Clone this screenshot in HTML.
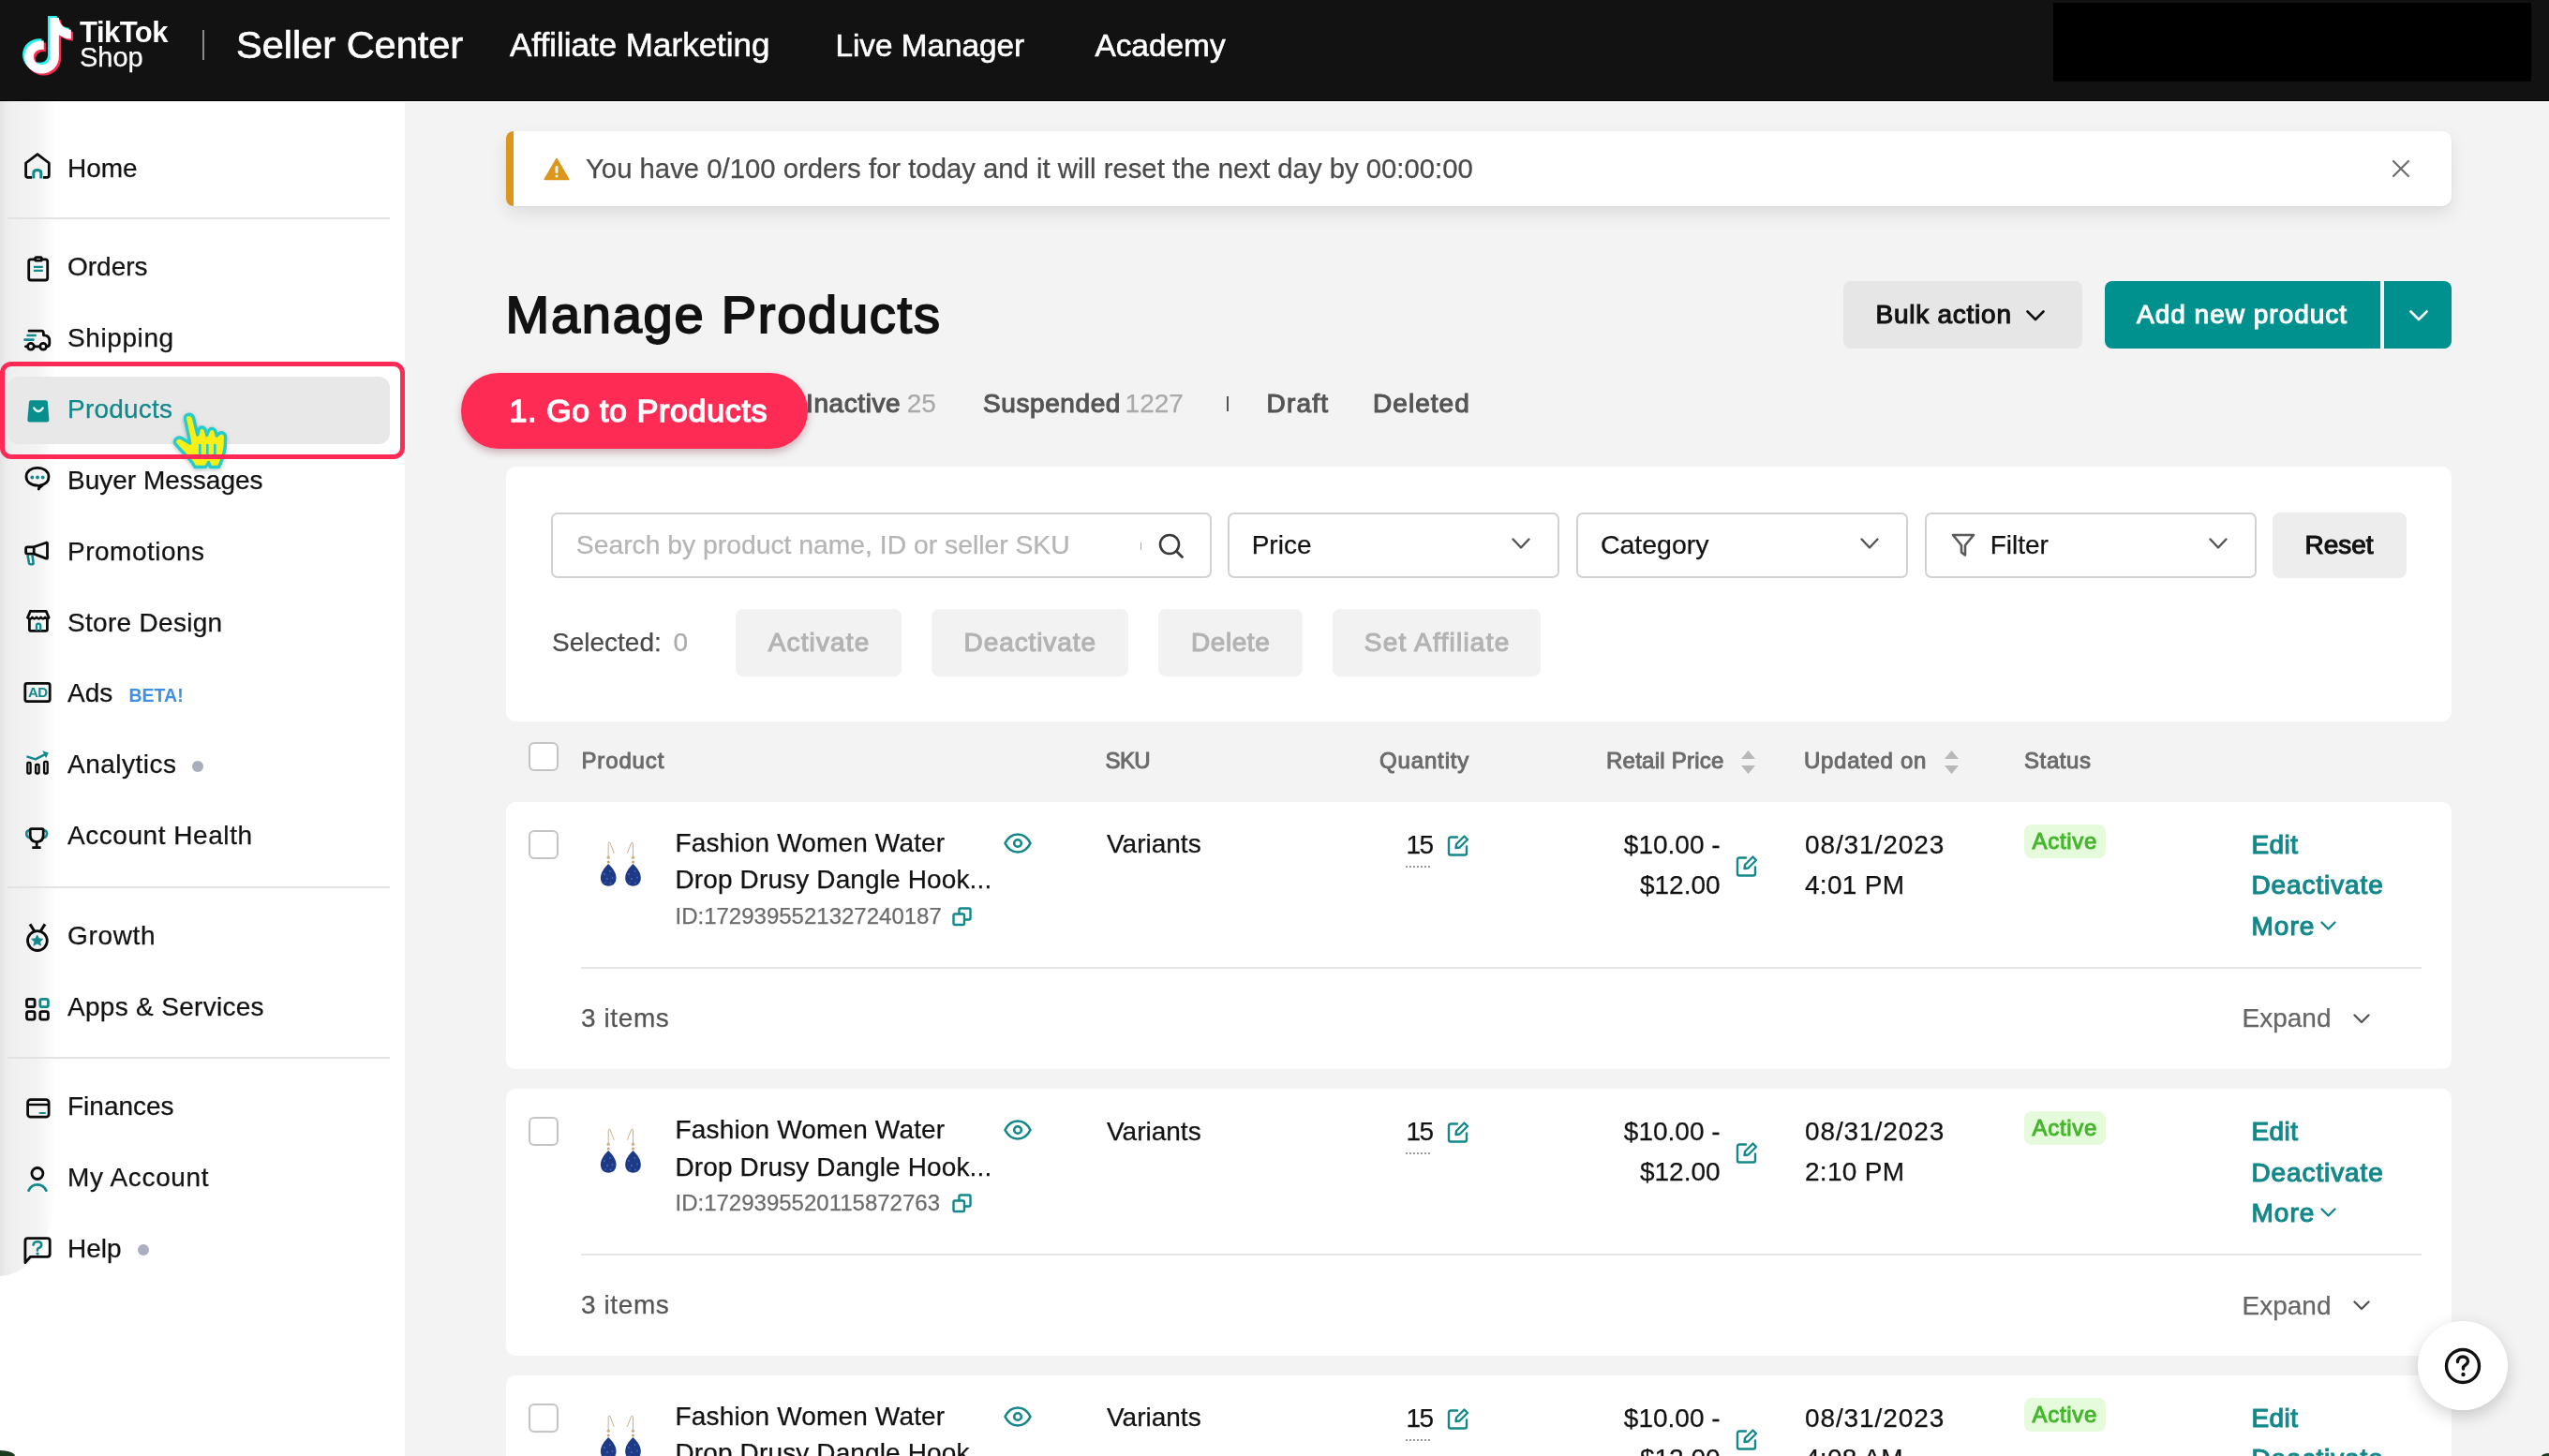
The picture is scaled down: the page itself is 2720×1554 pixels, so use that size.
<!DOCTYPE html>
<html><head><meta charset="utf-8"><style>
html,body{margin:0;padding:0;width:2720px;height:1554px;overflow:hidden;background:#f3f3f3;}
body{position:relative;font-family:"Liberation Sans",sans-serif;}
.t{position:absolute;white-space:pre;}
.t.n{-webkit-text-stroke:0.25px currentColor;}
.r{position:absolute;}
svg.r{overflow:visible}
</style></head><body>
<div style="position:absolute;left:0;top:0;width:2720px;height:1554px;overflow:hidden;will-change:transform">
<div class="r" style="left:0.0px;top:0.0px;width:2720.0px;height:108.0px;background:#121212"></div>
<div class="r" style="left:0.0px;top:106.5px;width:2720.0px;height:1.5px;background:#000"></div>
<div class="r" style="left:0.0px;top:108.0px;width:2720.0px;height:1.0px;background:#fff"></div>
<div class="r" style="left:2191.0px;top:3.0px;width:510.0px;height:84.0px;background:#000"></div>
<svg class="r" style="left:24.0px;top:16.0px" width="58" height="66" viewBox="0 0 58 66"><g transform="translate(0,1) scale(1.08,1.06)">
<path d="M27 2 h9 c0.5 6 4 11 12 12 v9 c-5 0 -9 -2 -12 -4 v22 c0 10 -8 17 -17 17 c-9 0 -17 -7 -17 -17 c0 -10 9 -17 19 -16 v9 c-5 -1 -10 2 -10 7 c0 5 4 8 8 8 c5 0 8 -3 8 -8 z" fill="#25f4ee" transform="translate(-2,-2)"/>
<path d="M27 2 h9 c0.5 6 4 11 12 12 v9 c-5 0 -9 -2 -12 -4 v22 c0 10 -8 17 -17 17 c-9 0 -17 -7 -17 -17 c0 -10 9 -17 19 -16 v9 c-5 -1 -10 2 -10 7 c0 5 4 8 8 8 c5 0 8 -3 8 -8 z" fill="#fe2c55" transform="translate(2,2)"/>
<path d="M27 2 h9 c0.5 6 4 11 12 12 v9 c-5 0 -9 -2 -12 -4 v22 c0 10 -8 17 -17 17 c-9 0 -17 -7 -17 -17 c0 -10 9 -17 19 -16 v9 c-5 -1 -10 2 -10 7 c0 5 4 8 8 8 c5 0 8 -3 8 -8 z" fill="#fff"/>
</g></svg>
<div class="t " style="left:85.0px;top:18.5px;font-size:31px;line-height:31px;color:#fff;font-weight:700;letter-spacing:-0.5px">TikTok</div>
<div class="t n" style="left:85.0px;top:47.3px;font-size:29px;line-height:29px;color:#fff;font-weight:400;">Shop</div>
<div class="r" style="left:216.0px;top:32.0px;width:2.0px;height:32.0px;background:#8a8a8a"></div>
<div class="t " style="left:252.0px;top:26.7px;font-size:41.5px;line-height:41.5px;color:#fff;font-weight:400;-webkit-text-stroke:0.7px #fff">Seller Center</div>
<div class="t " style="left:544.0px;top:30.4px;font-size:35px;line-height:35px;color:#fff;font-weight:400;-webkit-text-stroke:0.6px #fff">Affiliate Marketing</div>
<div class="t " style="left:891.4px;top:31.8px;font-size:33.3px;line-height:33.3px;color:#fff;font-weight:400;-webkit-text-stroke:0.6px #fff">Live Manager</div>
<div class="t " style="left:1168.4px;top:31.7px;font-size:33.4px;line-height:33.4px;color:#fff;font-weight:400;-webkit-text-stroke:0.6px #fff">Academy</div>
<div class="r" style="left:0.0px;top:108.0px;width:432.0px;height:1446.0px;background:#fff"></div>
<div class="r" style="left:0.0px;top:108.0px;width:60.0px;height:1254.0px;background:linear-gradient(90deg,#e3e3e3 0px,#ebebeb 6px,#f0f0f0 14px,#f3f3f3 40px,rgba(255,255,255,0) 60px);border-bottom-right-radius:60px 100px"></div>
<div class="r" style="left:8.0px;top:231.5px;width:408.0px;height:2.0px;background:#e3e3e3"></div>
<div class="r" style="left:8.0px;top:945.6px;width:408.0px;height:2.0px;background:#e3e3e3"></div>
<div class="r" style="left:8.0px;top:1127.5px;width:408.0px;height:2.0px;background:#e3e3e3"></div>
<div class="r" style="left:8.0px;top:402.0px;width:408.0px;height:72.0px;background:#e8e8e8;border-radius:12px"></div>
<div class="t n" style="left:72.0px;top:165.6px;font-size:28px;line-height:28px;color:#121212;font-weight:400;letter-spacing:0px">Home</div>
<div class="t n" style="left:72.0px;top:271.1px;font-size:28px;line-height:28px;color:#121212;font-weight:400;letter-spacing:0px">Orders</div>
<div class="t n" style="left:72.0px;top:347.1px;font-size:28px;line-height:28px;color:#121212;font-weight:400;letter-spacing:0.6px">Shipping</div>
<div class="t n" style="left:72.0px;top:423.0px;font-size:28px;line-height:28px;color:#13888a;font-weight:400;letter-spacing:0.2px">Products</div>
<div class="t n" style="left:72.0px;top:499.3px;font-size:28px;line-height:28px;color:#121212;font-weight:400;letter-spacing:0px">Buyer Messages</div>
<div class="t n" style="left:72.0px;top:574.8px;font-size:28px;line-height:28px;color:#121212;font-weight:400;letter-spacing:0.5px">Promotions</div>
<div class="t n" style="left:72.0px;top:650.6px;font-size:28px;line-height:28px;color:#121212;font-weight:400;letter-spacing:0.3px">Store Design</div>
<div class="t n" style="left:72.0px;top:726.3px;font-size:28px;line-height:28px;color:#121212;font-weight:400;letter-spacing:0px">Ads</div>
<div class="t n" style="left:72.0px;top:801.7px;font-size:28px;line-height:28px;color:#121212;font-weight:400;letter-spacing:0.5px">Analytics</div>
<div class="t n" style="left:72.0px;top:877.9px;font-size:28px;line-height:28px;color:#121212;font-weight:400;letter-spacing:0.55px">Account Health</div>
<div class="t n" style="left:72.0px;top:985.3px;font-size:28px;line-height:28px;color:#121212;font-weight:400;letter-spacing:0.65px">Growth</div>
<div class="t n" style="left:72.0px;top:1061.0px;font-size:28px;line-height:28px;color:#121212;font-weight:400;letter-spacing:0.3px">Apps &amp; Services</div>
<div class="t n" style="left:72.0px;top:1167.3px;font-size:28px;line-height:28px;color:#121212;font-weight:400;letter-spacing:0px">Finances</div>
<div class="t n" style="left:72.0px;top:1243.3px;font-size:28px;line-height:28px;color:#121212;font-weight:400;letter-spacing:0.65px">My Account</div>
<div class="t n" style="left:72.0px;top:1318.8px;font-size:28px;line-height:28px;color:#121212;font-weight:400;letter-spacing:0px">Help</div>
<svg class="r" style="left:0;top:0" width="432" height="1554" viewBox="0 0 432 1554"><path d="M27.6 174 L40 164.6 L52.3 174 V187.3 Q52.3 189.3 50.3 189.3 H29.6 Q27.6 189.3 27.6 187.3 Z" fill="none" stroke="#0a0a0a" stroke-width="2.8" stroke-linejoin="round"/><rect x="34" y="186" width="12" height="6" fill="#f4f4f4"/><path d="M35.8 190.5 V184.5 Q35.8 181.5 39.8 181.5 Q43.8 181.5 43.8 184.5 V190.5" fill="none" stroke="#13898b" stroke-width="3"/><rect x="30.7" y="276.8" width="20" height="22.2" rx="2.2" fill="none" stroke="#0a0a0a" stroke-width="2.8"/><rect x="37.6" y="274.6" width="6.8" height="3.6" rx="1.2" fill="#f6f6f6" stroke="#0a0a0a" stroke-width="2.8"/><path d="M35.9 284.9 H45.8 M35.9 288.9 H45.8" stroke="#13898b" stroke-width="2.4"/><path d="M31 353.2 H44.5 Q46.4 353.2 46.4 355.5 V357.8 H47 Q52.8 358 52.8 363.5 V366.5 Q52.8 369.8 50 369.8 H49.5" fill="none" stroke="#0a0a0a" stroke-width="2.8" stroke-linecap="round" stroke-linejoin="round"/><path d="M27.4 369.8 H29.5 M36.3 369.8 H42.7" stroke="#0a0a0a" stroke-width="2.8" stroke-linecap="round"/><circle cx="32.9" cy="369.8" r="3.4" fill="none" stroke="#0a0a0a" stroke-width="2.8"/><circle cx="46.1" cy="369.8" r="3.4" fill="none" stroke="#0a0a0a" stroke-width="2.8"/><path d="M29.5 358 H37.7 M26.5 362.6 H35.5" stroke="#13898b" stroke-width="2.6" stroke-linecap="round"/><path d="M33 427.3 H48.8 Q50.8 427.3 50.9 429.3 L52.4 448.3 Q52.5 450.4 50.4 450.4 H31.3 Q29.2 450.4 29.3 448.3 L31 429.3 Q31.1 427.3 33 427.3 Z" fill="#078f8d"/><path d="M36.3 435.6 Q40.9 442.5 45.6 435.6" fill="none" stroke="#e9f7f7" stroke-width="2.4" stroke-linecap="round"/><path d="M41.3 522 L42.5 518.2 C49 517 52 513.2 52 508.8 C52 503.2 46.6 499.3 39.9 499.3 C33.2 499.3 28 503.2 28 508.8 C28 514 32.5 517.8 40 518.2" fill="none" stroke="#0a0a0a" stroke-width="2.8" stroke-linejoin="round" stroke-linecap="round"/><path d="M40 517.6 L41.5 522.8 L47 518.5 Z" fill="#0a0a0a"/><circle cx="34.3" cy="509.5" r="1.9" fill="#13898b"/><circle cx="40" cy="509.5" r="1.9" fill="#13898b"/><circle cx="45.7" cy="509.5" r="1.9" fill="#13898b"/><path d="M29.5 592.5 L31 601 Q31.3 602.3 32.5 602.3 H34.5 Q35.8 602.3 35.6 601 L34.5 592.5" fill="none" stroke="#13898b" stroke-width="2.6" stroke-linejoin="round"/><path d="M29.4 583.8 H36.2 V591.1 H29.4 Q27.6 591.1 27.6 589.3 V585.6 Q27.6 583.8 29.4 583.8 Z" fill="#f5f5f5" stroke="#0a0a0a" stroke-width="2.8" stroke-linejoin="round"/><path d="M36.2 583.8 L49.3 579.2 Q50.5 578.9 50.5 580.2 V595.2 Q50.5 596.5 49.3 596.1 L36.2 591.1" fill="none" stroke="#0a0a0a" stroke-width="2.8" stroke-linejoin="round"/><path d="M32.4 652.3 H49.2 L52 659 M32.4 652.3 L29.6 659" fill="none" stroke="#0a0a0a" stroke-width="2.8" stroke-linejoin="round" stroke-linecap="round"/><path d="M29.6 659.3 Q32.5 662 34.4 658.8 Q36.6 662 39 658.8 Q41.4 662 43.6 658.8 Q45.9 662 48.2 658.8 Q50 661.5 52.1 659.3" fill="none" stroke="#0a0a0a" stroke-width="2.5" stroke-linejoin="round" stroke-linecap="round"/><path d="M31.4 660.5 V671.8 Q31.4 673.4 33 673.4 H48.8 Q50.4 673.4 50.4 671.8 V660.5" fill="none" stroke="#0a0a0a" stroke-width="2.8"/><path d="M39 673 V667.5 Q39 665.6 41.1 665.6 Q43.2 665.6 43.2 667.5 V673" fill="none" stroke="#13898b" stroke-width="2.3"/><rect x="26.8" y="729.4" width="26.4" height="19.2" rx="2" fill="none" stroke="#0a0a0a" stroke-width="2.8"/><text x="40.2" y="744.2" text-anchor="middle" font-family="Liberation Sans" font-weight="700" font-size="15" fill="#13898b" letter-spacing="-0.6">AD</text><rect x="29.3" y="813.9" width="3.3" height="11.6" rx="1" fill="none" stroke="#0a0a0a" stroke-width="2.3"/><rect x="38.1" y="816" width="3.5" height="9.5" rx="1" fill="none" stroke="#0a0a0a" stroke-width="2.3"/><rect x="47.1" y="812.9" width="3.6" height="12.6" rx="1" fill="none" stroke="#0a0a0a" stroke-width="2.3"/><path d="M28.4 807.4 L37.9 810.4 L48.5 804.8" fill="none" stroke="#13898b" stroke-width="2.5" stroke-linejoin="round"/><path d="M45.3 801.3 L51.8 803.4 L49 809.3 Z" fill="#13898b"/><path d="M31.6 886.2 Q28.2 886.2 28.2 889.5 Q28.2 893.6 32.6 894.6 M46.6 886.2 Q50 886.2 50 889.5 Q50 893.6 45.6 894.6" fill="none" stroke="#13898b" stroke-width="2.6" stroke-linecap="round"/><path d="M33.4 884.6 H45 Q46.2 884.6 46.2 885.8 V891.5 Q46.2 898.2 39.2 898.6 Q32.2 898.2 32.2 891.5 V885.8 Q32.2 884.6 33.4 884.6 Z" fill="none" stroke="#0a0a0a" stroke-width="2.8" stroke-linejoin="round"/><path d="M39.2 898.6 V904.3 M34.3 904.6 H43.6" stroke="#0a0a0a" stroke-width="2.8"/><path d="M32 986.4 L36.5 993.5 M48 986.4 L43.5 993.5" stroke="#0a0a0a" stroke-width="3"/><circle cx="39.9" cy="1004.1" r="10.4" fill="none" stroke="#0a0a0a" stroke-width="2.8"/><path d="M39.7 997.9 L41.6 1001.8 L45.8 1002.2 L42.7 1005 L43.6 1009.2 L39.7 1007 L35.8 1009.2 L36.8 1005 L33.6 1002.2 L37.9 1001.8 Z" fill="#13898b" stroke="#13898b" stroke-width="0.8" stroke-linejoin="round"/><rect x="28.5" y="1066.3" width="8.6" height="8.4" rx="2" fill="none" stroke="#0a0a0a" stroke-width="2.8"/><rect x="42.8" y="1066.3" width="8.6" height="8.4" rx="2" fill="none" stroke="#13898b" stroke-width="2.8"/><rect x="28.5" y="1079.7" width="8.6" height="8.4" rx="2" fill="none" stroke="#0a0a0a" stroke-width="2.8"/><rect x="42.8" y="1079.7" width="8.6" height="8.4" rx="2" fill="none" stroke="#0a0a0a" stroke-width="2.8"/><rect x="29.6" y="1173.6" width="22.5" height="18.6" rx="3" fill="none" stroke="#0a0a0a" stroke-width="2.8"/><path d="M30 1179 H51.8" stroke="#0a0a0a" stroke-width="2.4"/><path d="M42.6 1188 H48" stroke="#13898b" stroke-width="2.2" stroke-linecap="round"/><circle cx="39.9" cy="1252.5" r="6" fill="none" stroke="#0a0a0a" stroke-width="2.8"/><path d="M30.6 1270.6 Q33.5 1264.3 39.9 1264.3 Q46.3 1264.3 49.3 1270.6" fill="none" stroke="#13898b" stroke-width="2.8" stroke-linecap="round"/><path d="M26.9 1347.6 V1324.4 Q26.9 1321.6 29.7 1321.6 H50.4 Q53.2 1321.6 53.2 1324.4 V1338.5 Q53.2 1341.3 50.4 1341.3 H32.6 Z" fill="none" stroke="#0a0a0a" stroke-width="2.8" stroke-linejoin="round"/><path d="M35.6 1328.6 Q36 1325.2 40.1 1325.2 Q44.3 1325.2 44.3 1328.6 Q44.3 1330.8 41.8 1331.8 Q39.9 1332.5 39.9 1334.6" fill="none" stroke="#13898b" stroke-width="2.6" stroke-linecap="round"/><circle cx="40.1" cy="1338.1" r="1.7" fill="#13898b"/></svg>
<div class="t " style="left:137.5px;top:732.5px;font-size:19.5px;line-height:19.5px;color:#3f8fe6;font-weight:700;letter-spacing:0px">BETA!</div>
<div class="r" style="left:205.0px;top:812.0px;width:12.0px;height:12.0px;background:#a9aec0;border-radius:50%"></div>
<div class="r" style="left:147.0px;top:1328.0px;width:12.0px;height:12.0px;background:#a9aec0;border-radius:50%"></div>
<div class="r" style="left:432.0px;top:109.0px;width:2288.0px;height:1445.0px;background:#f3f3f3"></div>
<div class="r" style="left:540.0px;top:140.0px;width:2076.0px;height:80.0px;background:#fff;border-radius:10px;box-shadow:0 8px 18px rgba(0,0,0,0.09),0 1px 3px rgba(0,0,0,0.04);overflow:hidden"></div>
<div class="r" style="left:540.0px;top:140.0px;width:8.0px;height:80.0px;background:#dc961c;border-radius:10px 0 0 10px"></div>
<svg class="r" style="left:580.0px;top:168.0px" width="28" height="25" viewBox="0 0 28 25"><path d="M14 1.5 L26.8 23.5 H1.2 Z" fill="#dc961c" stroke="#dc961c" stroke-width="1.5" stroke-linejoin="round"/><rect x="12.6" y="9" width="2.8" height="8" rx="1" fill="#fff"/><circle cx="14" cy="20" r="1.5" fill="#fff"/></svg>
<div class="t n" style="left:625.0px;top:164.6px;font-size:29.3px;line-height:29.3px;color:#4a4a4a;font-weight:400;">You have 0/100 orders for today and it will reset the next day by 00:00:00</div>
<svg class="r" style="left:2553.0px;top:171.0px" width="18" height="18" viewBox="0 0 18 18"><path d="M1 1 L17 17 M17 1 L1 17" stroke="#6e6e6e" stroke-width="2.2" stroke-linecap="round"/></svg>
<div class="t " style="left:539.5px;top:308.2px;font-size:56px;line-height:56px;color:#121212;font-weight:401;-webkit-text-stroke:1.9px #121212;letter-spacing:1.75px;">Manage Products</div>
<div class="r" style="left:1967.0px;top:300.0px;width:255.0px;height:71.5px;background:#e6e6e6;border-radius:8px"></div>
<div class="t " style="left:2001.5px;top:321.7px;font-size:28px;line-height:28px;color:#121212;font-weight:401;-webkit-text-stroke:1.12px #121212;letter-spacing:0.75px;">Bulk action</div>
<svg class="r" style="left:2162.0px;top:331.0px" width="20" height="12" viewBox="0 0 20 12"><path d="M1.5 1.5 L10 10 L18.5 1.5" fill="none" stroke="#121212" stroke-width="2.6" stroke-linecap="round" stroke-linejoin="round"/></svg>
<div class="r" style="left:2246.0px;top:300.0px;width:294.0px;height:71.5px;background:#00918f;border-radius:8px 0 0 8px"></div>
<div class="r" style="left:2544.0px;top:300.0px;width:72.0px;height:71.5px;background:#00918f;border-radius:0 8px 8px 0"></div>
<div class="t " style="left:2280.0px;top:321.7px;font-size:28px;line-height:28px;color:#fff;font-weight:401;-webkit-text-stroke:1.12px #fff;letter-spacing:1.0px;">Add new product</div>
<svg class="r" style="left:2571.0px;top:331.0px" width="20" height="12" viewBox="0 0 20 12"><path d="M1.5 1.5 L10 10 L18.5 1.5" fill="none" stroke="#fff" stroke-width="2.6" stroke-linecap="round" stroke-linejoin="round"/></svg>
<div class="t " style="left:860.0px;top:417.1px;font-size:28px;line-height:28px;color:#555555;font-weight:401;-webkit-text-stroke:1.12px #555555;letter-spacing:0.6px;">Inactive</div>
<div class="t n" style="left:967.7px;top:417.1px;font-size:28px;line-height:28px;color:#aaaaaa;font-weight:400;">25</div>
<div class="t " style="left:1049.0px;top:417.1px;font-size:28px;line-height:28px;color:#555555;font-weight:401;-webkit-text-stroke:1.12px #555555;letter-spacing:0.59px;">Suspended</div>
<div class="t n" style="left:1200.6px;top:417.1px;font-size:28px;line-height:28px;color:#aaaaaa;font-weight:400;">1227</div>
<div class="r" style="left:1308.5px;top:423.0px;width:2.0px;height:16.0px;background:#555"></div>
<div class="t " style="left:1351.5px;top:417.1px;font-size:28px;line-height:28px;color:#555555;font-weight:401;-webkit-text-stroke:1.12px #555555;letter-spacing:1.2px;">Draft</div>
<div class="t " style="left:1465.0px;top:417.1px;font-size:28px;line-height:28px;color:#555555;font-weight:401;-webkit-text-stroke:1.12px #555555;letter-spacing:1.05px;">Deleted</div>
<div class="r" style="left:540.0px;top:498.0px;width:2076.0px;height:272.0px;background:#fff;border-radius:10px"></div>
<div class="r" style="left:588.4px;top:546.5px;width:704.3px;height:70.5px;background:#fff;border:2px solid #d2d2d2;border-radius:7px;box-sizing:border-box"></div>
<div class="t n" style="left:614.8px;top:567.4px;font-size:28.3px;line-height:28.3px;color:#b5b5b5;font-weight:400;">Search by product name, ID or seller SKU</div>
<div class="r" style="left:1216.5px;top:579.0px;width:1.5px;height:8.0px;background:#aaa"></div>
<svg class="r" style="left:1236.0px;top:569.0px" width="28" height="28" viewBox="0 0 28 28"><circle cx="12" cy="12" r="10" fill="none" stroke="#3a3a3a" stroke-width="2.6"/><path d="M19.5 19.5 L25.5 25.5" stroke="#3a3a3a" stroke-width="2.8" stroke-linecap="round"/></svg>
<div class="r" style="left:1309.6px;top:546.5px;width:354.9px;height:70.5px;background:#fff;border:2px solid #d2d2d2;border-radius:7px;box-sizing:border-box"></div>
<div class="t n" style="left:1335.7px;top:567.7px;font-size:28px;line-height:28px;color:#121212;font-weight:400;">Price</div>
<svg class="r" style="left:1613.0px;top:573.5px" width="20" height="12" viewBox="0 0 20 12"><path d="M1.5 1.5 L10 10.5 L18.5 1.5" fill="none" stroke="#555" stroke-width="2.4" stroke-linecap="round" stroke-linejoin="round"/></svg>
<div class="r" style="left:1681.8px;top:546.5px;width:354.6px;height:70.5px;background:#fff;border:2px solid #d2d2d2;border-radius:7px;box-sizing:border-box"></div>
<div class="t n" style="left:1707.9px;top:567.3px;font-size:28.5px;line-height:28.5px;color:#121212;font-weight:400;">Category</div>
<svg class="r" style="left:1985.0px;top:573.5px" width="20" height="12" viewBox="0 0 20 12"><path d="M1.5 1.5 L10 10.5 L18.5 1.5" fill="none" stroke="#555" stroke-width="2.4" stroke-linecap="round" stroke-linejoin="round"/></svg>
<div class="r" style="left:2053.8px;top:546.5px;width:354.7px;height:70.5px;background:#fff;border:2px solid #d2d2d2;border-radius:7px;box-sizing:border-box"></div>
<svg class="r" style="left:2082.0px;top:569.0px" width="26" height="26" viewBox="0 0 26 26"><path d="M2 2 H24 L15 13 V23.5 L11 20.5 V13 Z" fill="none" stroke="#5a5a5a" stroke-width="2.6" stroke-linejoin="round"/></svg>
<div class="t n" style="left:2123.7px;top:567.7px;font-size:28px;line-height:28px;color:#121212;font-weight:400;">Filter</div>
<svg class="r" style="left:2357.0px;top:573.5px" width="20" height="12" viewBox="0 0 20 12"><path d="M1.5 1.5 L10 10.5 L18.5 1.5" fill="none" stroke="#555" stroke-width="2.4" stroke-linecap="round" stroke-linejoin="round"/></svg>
<div class="r" style="left:2425.4px;top:546.5px;width:142.4px;height:70.5px;background:#ededed;border-radius:8px"></div>
<div class="t " style="left:2459.5px;top:567.7px;font-size:28px;line-height:28px;color:#121212;font-weight:401;-webkit-text-stroke:1.12px #121212;letter-spacing:0.0px;">Reset</div>
<div class="t n" style="left:589.0px;top:671.9px;font-size:28px;line-height:28px;color:#4a4a4a;font-weight:400;">Selected: </div>
<div class="t n" style="left:718.5px;top:671.9px;font-size:28px;line-height:28px;color:#aaaaaa;font-weight:400;">0</div>
<div class="r" style="left:785.0px;top:650.0px;width:177.0px;height:71.7px;background:#f2f2f2;border-radius:8px"></div>
<div class="t" style="left:785px;width:177.0px;top:671.9px;font-size:28px;line-height:28px;color:#b3b3b3;font-weight:400;text-align:center;-webkit-text-stroke:1.12px #b3b3b3;letter-spacing:1.14px;text-indent:1.14px">Activate</div>
<div class="r" style="left:994.0px;top:650.0px;width:209.6px;height:71.7px;background:#f2f2f2;border-radius:8px"></div>
<div class="t" style="left:994px;width:209.6px;top:671.9px;font-size:28px;line-height:28px;color:#b3b3b3;font-weight:400;text-align:center;-webkit-text-stroke:1.12px #b3b3b3;letter-spacing:0.91px;text-indent:0.91px">Deactivate</div>
<div class="r" style="left:1236.0px;top:650.0px;width:153.8px;height:71.7px;background:#f2f2f2;border-radius:8px"></div>
<div class="t" style="left:1236px;width:153.8px;top:671.9px;font-size:28px;line-height:28px;color:#b3b3b3;font-weight:400;text-align:center;-webkit-text-stroke:1.12px #b3b3b3;letter-spacing:0.54px;text-indent:0.54px">Delete</div>
<div class="r" style="left:1422.0px;top:650.0px;width:222.0px;height:71.7px;background:#f2f2f2;border-radius:8px"></div>
<div class="t" style="left:1422px;width:222.0px;top:671.9px;font-size:28px;line-height:28px;color:#b3b3b3;font-weight:400;text-align:center;-webkit-text-stroke:1.12px #b3b3b3;letter-spacing:1.25px;text-indent:1.25px">Set Affiliate</div>
<div class="r" style="left:564.4px;top:791.5px;width:31.5px;height:31.5px;background:#fff;border:2px solid #c4c4c4;border-radius:6px;box-sizing:border-box"></div>
<div class="t " style="left:620.5px;top:800.3px;font-size:24px;line-height:24px;color:#6b6b6b;font-weight:401;-webkit-text-stroke:0.96px #6b6b6b;letter-spacing:0.85px;">Product</div>
<div class="t " style="left:1179.5px;top:800.3px;font-size:24px;line-height:24px;color:#6b6b6b;font-weight:401;-webkit-text-stroke:0.96px #6b6b6b;letter-spacing:-0.6px;">SKU</div>
<div class="t " style="left:1472.0px;top:800.3px;font-size:24px;line-height:24px;color:#6b6b6b;font-weight:401;-webkit-text-stroke:0.96px #6b6b6b;letter-spacing:0.85px;">Quantity</div>
<div class="t " style="left:1714.0px;top:800.3px;font-size:24px;line-height:24px;color:#6b6b6b;font-weight:401;-webkit-text-stroke:0.96px #6b6b6b;letter-spacing:0.24px;">Retail Price</div>
<svg class="r" style="left:1857.5px;top:800.6px" width="15" height="25" viewBox="0 0 15 25"><path d="M7.5 0 L15 9 H0 Z M7.5 25 L15 16 H0 Z" fill="#b8b8b8"/></svg>
<div class="t " style="left:1925.0px;top:800.3px;font-size:24px;line-height:24px;color:#6b6b6b;font-weight:401;-webkit-text-stroke:0.96px #6b6b6b;letter-spacing:0.7px;">Updated on</div>
<svg class="r" style="left:2074.5px;top:800.6px" width="15" height="25" viewBox="0 0 15 25"><path d="M7.5 0 L15 9 H0 Z M7.5 25 L15 16 H0 Z" fill="#b8b8b8"/></svg>
<div class="t " style="left:2160.0px;top:800.3px;font-size:24px;line-height:24px;color:#6b6b6b;font-weight:401;-webkit-text-stroke:0.96px #6b6b6b;letter-spacing:0.6px;">Status</div>
<div class="r" style="left:540.0px;top:856.0px;width:2076.0px;height:285.0px;background:#fff;border-radius:10px"></div>
<div class="r" style="left:564.4px;top:885.5px;width:31.5px;height:31.5px;background:#fff;border:2px solid #c4c4c4;border-radius:6px;box-sizing:border-box"></div>
<svg class="r" style="left:639.0px;top:896.5px" width="48" height="52" viewBox="0 0 48 52"><g fill="none" stroke="#cdb08a" stroke-width="1"><path d="M10.2 18 V3.5 Q10.5 1.2 12 2.6 L16.3 13.8"/><path d="M36.5 18 V3.5 Q36.2 1.2 34.7 2.6 L30.3 13.8"/></g><circle cx="10.2" cy="18.2" r="1.7" fill="#cbb08c"/><circle cx="36.5" cy="18.2" r="1.7" fill="#cbb08c"/><circle cx="10.2" cy="23" r="1.5" fill="#c4a47c"/><circle cx="36.5" cy="23" r="1.5" fill="#c4a47c"/><path d="M10.2 25 C5.5 29.5 1.9 34.5 1.9 40 C1.9 45.5 5.6 48.7 10.2 48.7 C14.8 48.7 18.5 45.5 18.5 40 C18.5 34.5 14.9 29.5 10.2 25 Z" fill="#1f3a85"/><path d="M36.5 25 C31.8 29.5 28.2 34.5 28.2 40 C28.2 45.5 31.9 48.7 36.5 48.7 C41.1 48.7 44.8 45.5 44.8 40 C44.8 34.5 41.2 29.5 36.5 25 Z" fill="#1f3a85"/><g fill="#3f72d6" opacity="0.85"><circle cx="6" cy="36" r="1"/><circle cx="12" cy="33" r="0.9"/><circle cx="9" cy="41" r="1.1"/><circle cx="14.5" cy="40" r="0.9"/><circle cx="7" cy="45" r="0.8"/><circle cx="12.5" cy="45.5" r="0.9"/><circle cx="32" cy="36" r="1"/><circle cx="38.5" cy="33" r="0.9"/><circle cx="35" cy="41" r="1.1"/><circle cx="41" cy="39.5" r="0.9"/><circle cx="33" cy="45" r="0.8"/><circle cx="39" cy="45.5" r="0.9"/></g></svg>
<div class="t n" style="left:720.5px;top:885.6px;font-size:28px;line-height:28px;color:#121212;font-weight:400;letter-spacing:0.16px">Fashion Women Water</div>
<div class="t n" style="left:720.5px;top:925.1px;font-size:28px;line-height:28px;color:#121212;font-weight:400;letter-spacing:0.13px">Drop Drusy Dangle Hook...</div>
<div class="t n" style="left:720.5px;top:965.5px;font-size:24px;line-height:24px;color:#6b6b6b;font-weight:400;">ID:1729395521327240187</div>
<svg class="r" style="left:1015.5px;top:968.0px" width="21" height="21" viewBox="0 0 21 21"><rect x="1.5" y="7.5" width="11.5" height="11.5" rx="1.5" fill="none" stroke="#13888a" stroke-width="2.4"/><path d="M7.5 7.5 V3 A1.5 1.5 0 0 1 9 1.5 H18 A1.5 1.5 0 0 1 19.5 3 V12 A1.5 1.5 0 0 1 18 13.5 H13" fill="none" stroke="#13888a" stroke-width="2.4"/></svg>
<svg class="r" style="left:1071.0px;top:888.5px" width="30" height="22" viewBox="0 0 30 22"><path d="M1.5 11 C5 4 10 1.5 15 1.5 C20 1.5 25 4 28.5 11 C25 18 20 20.5 15 20.5 C10 20.5 5 18 1.5 11 Z" fill="none" stroke="#13888a" stroke-width="2.6" stroke-linejoin="round"/><circle cx="15" cy="11" r="3.8" fill="none" stroke="#13888a" stroke-width="2.6"/></svg>
<div class="t n" style="left:1181.0px;top:887.2px;font-size:28px;line-height:28px;color:#121212;font-weight:400;">Variants</div>
<div class="t n" style="left:1500.5px;top:887.6px;font-size:28px;line-height:28px;color:#121212;font-weight:400;letter-spacing:-1.5px">15</div>
<div class="r" style="left:1500.0px;top:924.0px;width:28.0px;height:2.0px;background-image:linear-gradient(90deg,#999 50%,transparent 50%);background-size:4px 2px"></div>
<svg class="r" style="left:1544.0px;top:891.0px" width="24" height="24" viewBox="0 0 24 24"><path d="M11 2.5 H4 A2 2 0 0 0 2 4.5 V19.5 A2 2 0 0 0 4 21.5 H19 A2 2 0 0 0 21 19.5 V12.5" fill="none" stroke="#13888a" stroke-width="2.4" stroke-linecap="round"/><path d="M9.5 14 L10 10 L18.5 1.5 L22 5 L13.5 13.5 Z" fill="none" stroke="#13888a" stroke-width="2.3" stroke-linejoin="round"/></svg>
<div class="t n" style="right:884.4px;top:887.6px;font-size:28px;line-height:28px;color:#121212;font-weight:400;text-align:right;">$10.00 -</div>
<div class="t n" style="right:884.4px;top:930.7px;font-size:28px;line-height:28px;color:#121212;font-weight:400;text-align:right;">$12.00</div>
<svg class="r" style="left:1852.0px;top:913.0px" width="24" height="24" viewBox="0 0 24 24"><path d="M11 2.5 H4 A2 2 0 0 0 2 4.5 V19.5 A2 2 0 0 0 4 21.5 H19 A2 2 0 0 0 21 19.5 V12.5" fill="none" stroke="#13888a" stroke-width="2.4" stroke-linecap="round"/><path d="M9.5 14 L10 10 L18.5 1.5 L22 5 L13.5 13.5 Z" fill="none" stroke="#13888a" stroke-width="2.3" stroke-linejoin="round"/></svg>
<div class="t n" style="left:1926.0px;top:887.5px;font-size:28px;line-height:28px;color:#121212;font-weight:400;letter-spacing:0.9px">08/31/2023</div>
<div class="t n" style="left:1926.0px;top:931.0px;font-size:28px;line-height:28px;color:#121212;font-weight:400;letter-spacing:0.3px">4:01 PM</div>
<div class="r" style="left:2160.0px;top:880.0px;width:87.0px;height:35.8px;background:#e6fbdc;border-radius:8px"></div>
<div class="t " style="left:2168.5px;top:886.0px;font-size:24px;line-height:24px;color:#45b52d;font-weight:401;-webkit-text-stroke:0.96px #45b52d;letter-spacing:0.7px;">Active</div>
<div class="t " style="left:2402.5px;top:887.5px;font-size:28px;line-height:28px;color:#13888a;font-weight:401;-webkit-text-stroke:1.12px #13888a;letter-spacing:0.4px;">Edit</div>
<div class="t " style="left:2402.5px;top:931.3px;font-size:28px;line-height:28px;color:#13888a;font-weight:401;-webkit-text-stroke:1.12px #13888a;letter-spacing:0.88px;">Deactivate</div>
<div class="t " style="left:2402.5px;top:974.6px;font-size:28px;line-height:28px;color:#13888a;font-weight:401;-webkit-text-stroke:1.12px #13888a;letter-spacing:1.0px;">More</div>
<svg class="r" style="left:2476.0px;top:983.0px" width="17" height="10" viewBox="0 0 17 10"><path d="M1.5 1.5 L8.5 8.5 L15.5 1.5" fill="none" stroke="#13888a" stroke-width="2.4" stroke-linecap="round" stroke-linejoin="round"/></svg>
<div class="r" style="left:620.0px;top:1031.5px;width:1964.0px;height:2.0px;background:#e6e6e6"></div>
<div class="t n" style="left:620.0px;top:1072.9px;font-size:28px;line-height:28px;color:#555555;font-weight:400;letter-spacing:0.6px">3 items</div>
<div class="t n" style="left:2392.5px;top:1073.3px;font-size:28px;line-height:28px;color:#666666;font-weight:400;">Expand</div>
<svg class="r" style="left:2511.0px;top:1082.0px" width="18" height="11" viewBox="0 0 18 11"><path d="M1.5 1.5 L9 9 L16.5 1.5" fill="none" stroke="#555" stroke-width="2.4" stroke-linecap="round" stroke-linejoin="round"/></svg>
<div class="r" style="left:540.0px;top:1162.4px;width:2076.0px;height:285.0px;background:#fff;border-radius:10px"></div>
<div class="r" style="left:564.4px;top:1191.9px;width:31.5px;height:31.5px;background:#fff;border:2px solid #c4c4c4;border-radius:6px;box-sizing:border-box"></div>
<svg class="r" style="left:639.0px;top:1202.9px" width="48" height="52" viewBox="0 0 48 52"><g fill="none" stroke="#cdb08a" stroke-width="1"><path d="M10.2 18 V3.5 Q10.5 1.2 12 2.6 L16.3 13.8"/><path d="M36.5 18 V3.5 Q36.2 1.2 34.7 2.6 L30.3 13.8"/></g><circle cx="10.2" cy="18.2" r="1.7" fill="#cbb08c"/><circle cx="36.5" cy="18.2" r="1.7" fill="#cbb08c"/><circle cx="10.2" cy="23" r="1.5" fill="#c4a47c"/><circle cx="36.5" cy="23" r="1.5" fill="#c4a47c"/><path d="M10.2 25 C5.5 29.5 1.9 34.5 1.9 40 C1.9 45.5 5.6 48.7 10.2 48.7 C14.8 48.7 18.5 45.5 18.5 40 C18.5 34.5 14.9 29.5 10.2 25 Z" fill="#1f3a85"/><path d="M36.5 25 C31.8 29.5 28.2 34.5 28.2 40 C28.2 45.5 31.9 48.7 36.5 48.7 C41.1 48.7 44.8 45.5 44.8 40 C44.8 34.5 41.2 29.5 36.5 25 Z" fill="#1f3a85"/><g fill="#3f72d6" opacity="0.85"><circle cx="6" cy="36" r="1"/><circle cx="12" cy="33" r="0.9"/><circle cx="9" cy="41" r="1.1"/><circle cx="14.5" cy="40" r="0.9"/><circle cx="7" cy="45" r="0.8"/><circle cx="12.5" cy="45.5" r="0.9"/><circle cx="32" cy="36" r="1"/><circle cx="38.5" cy="33" r="0.9"/><circle cx="35" cy="41" r="1.1"/><circle cx="41" cy="39.5" r="0.9"/><circle cx="33" cy="45" r="0.8"/><circle cx="39" cy="45.5" r="0.9"/></g></svg>
<div class="t n" style="left:720.5px;top:1192.0px;font-size:28px;line-height:28px;color:#121212;font-weight:400;letter-spacing:0.16px">Fashion Women Water</div>
<div class="t n" style="left:720.5px;top:1231.5px;font-size:28px;line-height:28px;color:#121212;font-weight:400;letter-spacing:0.13px">Drop Drusy Dangle Hook...</div>
<div class="t n" style="left:720.5px;top:1271.9px;font-size:24px;line-height:24px;color:#6b6b6b;font-weight:400;">ID:1729395520115872763</div>
<svg class="r" style="left:1015.5px;top:1274.4px" width="21" height="21" viewBox="0 0 21 21"><rect x="1.5" y="7.5" width="11.5" height="11.5" rx="1.5" fill="none" stroke="#13888a" stroke-width="2.4"/><path d="M7.5 7.5 V3 A1.5 1.5 0 0 1 9 1.5 H18 A1.5 1.5 0 0 1 19.5 3 V12 A1.5 1.5 0 0 1 18 13.5 H13" fill="none" stroke="#13888a" stroke-width="2.4"/></svg>
<svg class="r" style="left:1071.0px;top:1194.9px" width="30" height="22" viewBox="0 0 30 22"><path d="M1.5 11 C5 4 10 1.5 15 1.5 C20 1.5 25 4 28.5 11 C25 18 20 20.5 15 20.5 C10 20.5 5 18 1.5 11 Z" fill="none" stroke="#13888a" stroke-width="2.6" stroke-linejoin="round"/><circle cx="15" cy="11" r="3.8" fill="none" stroke="#13888a" stroke-width="2.6"/></svg>
<div class="t n" style="left:1181.0px;top:1193.6px;font-size:28px;line-height:28px;color:#121212;font-weight:400;">Variants</div>
<div class="t n" style="left:1500.5px;top:1194.0px;font-size:28px;line-height:28px;color:#121212;font-weight:400;letter-spacing:-1.5px">15</div>
<div class="r" style="left:1500.0px;top:1230.4px;width:28.0px;height:2.0px;background-image:linear-gradient(90deg,#999 50%,transparent 50%);background-size:4px 2px"></div>
<svg class="r" style="left:1544.0px;top:1197.4px" width="24" height="24" viewBox="0 0 24 24"><path d="M11 2.5 H4 A2 2 0 0 0 2 4.5 V19.5 A2 2 0 0 0 4 21.5 H19 A2 2 0 0 0 21 19.5 V12.5" fill="none" stroke="#13888a" stroke-width="2.4" stroke-linecap="round"/><path d="M9.5 14 L10 10 L18.5 1.5 L22 5 L13.5 13.5 Z" fill="none" stroke="#13888a" stroke-width="2.3" stroke-linejoin="round"/></svg>
<div class="t n" style="right:884.4px;top:1194.0px;font-size:28px;line-height:28px;color:#121212;font-weight:400;text-align:right;">$10.00 -</div>
<div class="t n" style="right:884.4px;top:1237.1px;font-size:28px;line-height:28px;color:#121212;font-weight:400;text-align:right;">$12.00</div>
<svg class="r" style="left:1852.0px;top:1219.4px" width="24" height="24" viewBox="0 0 24 24"><path d="M11 2.5 H4 A2 2 0 0 0 2 4.5 V19.5 A2 2 0 0 0 4 21.5 H19 A2 2 0 0 0 21 19.5 V12.5" fill="none" stroke="#13888a" stroke-width="2.4" stroke-linecap="round"/><path d="M9.5 14 L10 10 L18.5 1.5 L22 5 L13.5 13.5 Z" fill="none" stroke="#13888a" stroke-width="2.3" stroke-linejoin="round"/></svg>
<div class="t n" style="left:1926.0px;top:1193.9px;font-size:28px;line-height:28px;color:#121212;font-weight:400;letter-spacing:0.9px">08/31/2023</div>
<div class="t n" style="left:1926.0px;top:1237.4px;font-size:28px;line-height:28px;color:#121212;font-weight:400;letter-spacing:0.3px">2:10 PM</div>
<div class="r" style="left:2160.0px;top:1186.4px;width:87.0px;height:35.8px;background:#e6fbdc;border-radius:8px"></div>
<div class="t " style="left:2168.5px;top:1192.4px;font-size:24px;line-height:24px;color:#45b52d;font-weight:401;-webkit-text-stroke:0.96px #45b52d;letter-spacing:0.7px;">Active</div>
<div class="t " style="left:2402.5px;top:1193.9px;font-size:28px;line-height:28px;color:#13888a;font-weight:401;-webkit-text-stroke:1.12px #13888a;letter-spacing:0.4px;">Edit</div>
<div class="t " style="left:2402.5px;top:1237.7px;font-size:28px;line-height:28px;color:#13888a;font-weight:401;-webkit-text-stroke:1.12px #13888a;letter-spacing:0.88px;">Deactivate</div>
<div class="t " style="left:2402.5px;top:1281.0px;font-size:28px;line-height:28px;color:#13888a;font-weight:401;-webkit-text-stroke:1.12px #13888a;letter-spacing:1.0px;">More</div>
<svg class="r" style="left:2476.0px;top:1289.4px" width="17" height="10" viewBox="0 0 17 10"><path d="M1.5 1.5 L8.5 8.5 L15.5 1.5" fill="none" stroke="#13888a" stroke-width="2.4" stroke-linecap="round" stroke-linejoin="round"/></svg>
<div class="r" style="left:620.0px;top:1337.9px;width:1964.0px;height:2.0px;background:#e6e6e6"></div>
<div class="t n" style="left:620.0px;top:1379.3px;font-size:28px;line-height:28px;color:#555555;font-weight:400;letter-spacing:0.6px">3 items</div>
<div class="t n" style="left:2392.5px;top:1379.7px;font-size:28px;line-height:28px;color:#666666;font-weight:400;">Expand</div>
<svg class="r" style="left:2511.0px;top:1388.4px" width="18" height="11" viewBox="0 0 18 11"><path d="M1.5 1.5 L9 9 L16.5 1.5" fill="none" stroke="#555" stroke-width="2.4" stroke-linecap="round" stroke-linejoin="round"/></svg>
<div class="r" style="left:540.0px;top:1468.0px;width:2076.0px;height:285.0px;background:#fff;border-radius:10px"></div>
<div class="r" style="left:564.4px;top:1497.5px;width:31.5px;height:31.5px;background:#fff;border:2px solid #c4c4c4;border-radius:6px;box-sizing:border-box"></div>
<svg class="r" style="left:639.0px;top:1508.5px" width="48" height="52" viewBox="0 0 48 52"><g fill="none" stroke="#cdb08a" stroke-width="1"><path d="M10.2 18 V3.5 Q10.5 1.2 12 2.6 L16.3 13.8"/><path d="M36.5 18 V3.5 Q36.2 1.2 34.7 2.6 L30.3 13.8"/></g><circle cx="10.2" cy="18.2" r="1.7" fill="#cbb08c"/><circle cx="36.5" cy="18.2" r="1.7" fill="#cbb08c"/><circle cx="10.2" cy="23" r="1.5" fill="#c4a47c"/><circle cx="36.5" cy="23" r="1.5" fill="#c4a47c"/><path d="M10.2 25 C5.5 29.5 1.9 34.5 1.9 40 C1.9 45.5 5.6 48.7 10.2 48.7 C14.8 48.7 18.5 45.5 18.5 40 C18.5 34.5 14.9 29.5 10.2 25 Z" fill="#1f3a85"/><path d="M36.5 25 C31.8 29.5 28.2 34.5 28.2 40 C28.2 45.5 31.9 48.7 36.5 48.7 C41.1 48.7 44.8 45.5 44.8 40 C44.8 34.5 41.2 29.5 36.5 25 Z" fill="#1f3a85"/><g fill="#3f72d6" opacity="0.85"><circle cx="6" cy="36" r="1"/><circle cx="12" cy="33" r="0.9"/><circle cx="9" cy="41" r="1.1"/><circle cx="14.5" cy="40" r="0.9"/><circle cx="7" cy="45" r="0.8"/><circle cx="12.5" cy="45.5" r="0.9"/><circle cx="32" cy="36" r="1"/><circle cx="38.5" cy="33" r="0.9"/><circle cx="35" cy="41" r="1.1"/><circle cx="41" cy="39.5" r="0.9"/><circle cx="33" cy="45" r="0.8"/><circle cx="39" cy="45.5" r="0.9"/></g></svg>
<div class="t n" style="left:720.5px;top:1497.6px;font-size:28px;line-height:28px;color:#121212;font-weight:400;letter-spacing:0.16px">Fashion Women Water</div>
<div class="t n" style="left:720.5px;top:1537.1px;font-size:28px;line-height:28px;color:#121212;font-weight:400;letter-spacing:0.13px">Drop Drusy Dangle Hook...</div>
<div class="t n" style="left:720.5px;top:1577.5px;font-size:24px;line-height:24px;color:#6b6b6b;font-weight:400;">ID:1729395520115872000</div>
<svg class="r" style="left:1015.5px;top:1580.0px" width="21" height="21" viewBox="0 0 21 21"><rect x="1.5" y="7.5" width="11.5" height="11.5" rx="1.5" fill="none" stroke="#13888a" stroke-width="2.4"/><path d="M7.5 7.5 V3 A1.5 1.5 0 0 1 9 1.5 H18 A1.5 1.5 0 0 1 19.5 3 V12 A1.5 1.5 0 0 1 18 13.5 H13" fill="none" stroke="#13888a" stroke-width="2.4"/></svg>
<svg class="r" style="left:1071.0px;top:1500.5px" width="30" height="22" viewBox="0 0 30 22"><path d="M1.5 11 C5 4 10 1.5 15 1.5 C20 1.5 25 4 28.5 11 C25 18 20 20.5 15 20.5 C10 20.5 5 18 1.5 11 Z" fill="none" stroke="#13888a" stroke-width="2.6" stroke-linejoin="round"/><circle cx="15" cy="11" r="3.8" fill="none" stroke="#13888a" stroke-width="2.6"/></svg>
<div class="t n" style="left:1181.0px;top:1499.2px;font-size:28px;line-height:28px;color:#121212;font-weight:400;">Variants</div>
<div class="t n" style="left:1500.5px;top:1499.6px;font-size:28px;line-height:28px;color:#121212;font-weight:400;letter-spacing:-1.5px">15</div>
<div class="r" style="left:1500.0px;top:1536.0px;width:28.0px;height:2.0px;background-image:linear-gradient(90deg,#999 50%,transparent 50%);background-size:4px 2px"></div>
<svg class="r" style="left:1544.0px;top:1503.0px" width="24" height="24" viewBox="0 0 24 24"><path d="M11 2.5 H4 A2 2 0 0 0 2 4.5 V19.5 A2 2 0 0 0 4 21.5 H19 A2 2 0 0 0 21 19.5 V12.5" fill="none" stroke="#13888a" stroke-width="2.4" stroke-linecap="round"/><path d="M9.5 14 L10 10 L18.5 1.5 L22 5 L13.5 13.5 Z" fill="none" stroke="#13888a" stroke-width="2.3" stroke-linejoin="round"/></svg>
<div class="t n" style="right:884.4px;top:1499.6px;font-size:28px;line-height:28px;color:#121212;font-weight:400;text-align:right;">$10.00 -</div>
<div class="t n" style="right:884.4px;top:1542.7px;font-size:28px;line-height:28px;color:#121212;font-weight:400;text-align:right;">$12.00</div>
<svg class="r" style="left:1852.0px;top:1525.0px" width="24" height="24" viewBox="0 0 24 24"><path d="M11 2.5 H4 A2 2 0 0 0 2 4.5 V19.5 A2 2 0 0 0 4 21.5 H19 A2 2 0 0 0 21 19.5 V12.5" fill="none" stroke="#13888a" stroke-width="2.4" stroke-linecap="round"/><path d="M9.5 14 L10 10 L18.5 1.5 L22 5 L13.5 13.5 Z" fill="none" stroke="#13888a" stroke-width="2.3" stroke-linejoin="round"/></svg>
<div class="t n" style="left:1926.0px;top:1499.5px;font-size:28px;line-height:28px;color:#121212;font-weight:400;letter-spacing:0.9px">08/31/2023</div>
<div class="t n" style="left:1926.0px;top:1543.0px;font-size:28px;line-height:28px;color:#121212;font-weight:400;letter-spacing:0.3px">4:08 AM</div>
<div class="r" style="left:2160.0px;top:1492.0px;width:87.0px;height:35.8px;background:#e6fbdc;border-radius:8px"></div>
<div class="t " style="left:2168.5px;top:1498.0px;font-size:24px;line-height:24px;color:#45b52d;font-weight:401;-webkit-text-stroke:0.96px #45b52d;letter-spacing:0.7px;">Active</div>
<div class="t " style="left:2402.5px;top:1499.5px;font-size:28px;line-height:28px;color:#13888a;font-weight:401;-webkit-text-stroke:1.12px #13888a;letter-spacing:0.4px;">Edit</div>
<div class="t " style="left:2402.5px;top:1543.3px;font-size:28px;line-height:28px;color:#13888a;font-weight:401;-webkit-text-stroke:1.12px #13888a;letter-spacing:0.88px;">Deactivate</div>
<div class="t " style="left:2402.5px;top:1586.6px;font-size:28px;line-height:28px;color:#13888a;font-weight:401;-webkit-text-stroke:1.12px #13888a;letter-spacing:1.0px;">More</div>
<svg class="r" style="left:2476.0px;top:1595.0px" width="17" height="10" viewBox="0 0 17 10"><path d="M1.5 1.5 L8.5 8.5 L15.5 1.5" fill="none" stroke="#13888a" stroke-width="2.4" stroke-linecap="round" stroke-linejoin="round"/></svg>
<div class="r" style="left:620.0px;top:1643.5px;width:1964.0px;height:2.0px;background:#e6e6e6"></div>
<div class="t n" style="left:620.0px;top:1684.9px;font-size:28px;line-height:28px;color:#555555;font-weight:400;letter-spacing:0.6px">3 items</div>
<div class="t n" style="left:2392.5px;top:1685.3px;font-size:28px;line-height:28px;color:#666666;font-weight:400;">Expand</div>
<svg class="r" style="left:2511.0px;top:1694.0px" width="18" height="11" viewBox="0 0 18 11"><path d="M1.5 1.5 L9 9 L16.5 1.5" fill="none" stroke="#555" stroke-width="2.4" stroke-linecap="round" stroke-linejoin="round"/></svg>
<div class="r" style="left:492.0px;top:397.5px;width:370.0px;height:81.0px;background:#fe2c55;border-radius:40px;box-shadow:0 4px 9px rgba(110,20,40,0.30)"></div>
<div class="t " style="left:543.5px;top:421.2px;font-size:34px;line-height:34px;color:#fff;font-weight:401;-webkit-text-stroke:1.4px #fff;letter-spacing:0.65px;">1. Go to Products</div>
<div class="r" style="left:2579.6px;top:1409.6px;width:96.2px;height:95.8px;background:#fff;border-radius:50%;box-shadow:0 6px 18px rgba(0,0,0,0.18)"></div>
<svg class="r" style="left:2608.0px;top:1438.0px" width="40" height="40" viewBox="0 0 40 40"><circle cx="20" cy="20" r="17.5" fill="none" stroke="#121212" stroke-width="3.4"/><path d="M14.5 15.5 C14.5 12 17 10 20 10 C23 10 25.5 12 25.5 15 C25.5 18 22 19 20.5 21 V23" fill="none" stroke="#121212" stroke-width="3.4" stroke-linecap="round"/><circle cx="20.5" cy="29" r="2.2" fill="#121212"/></svg>
<svg class="r" style="left:184.0px;top:440.0px" width="60" height="63" viewBox="0 0 60 63"><g filter="url(#hs)"><path d="M18.8 33 L13.5 7.5 Q12.8 2.5 17.5 2.2 Q21.5 2.2 22.5 6 L26.8 24 L28 19 Q29.3 15.5 32 16 Q35 16.8 35.8 20.5 L36.8 24.5 L38.5 20 Q40 16.8 43 17.5 Q46 18.5 46.5 22 L47.3 25 Q50 21.3 53.5 21.8 Q56.8 22.8 56.6 27.5 L56.3 36 Q55.5 46 49.5 58.5 L40.5 58.5 L38.5 53.5 L35.5 58.5 L24 58.5 Q21 53 18 50 L4 35 Q1 31.5 3.5 28.8 Q6.5 26 10 27.8 Z" fill="#f7ef12" stroke="#27cccc" stroke-width="3.4" stroke-linejoin="round"/><path d="M29.3 34 V45 M37.3 34 V45 M45.3 34 V45" stroke="#27cccc" stroke-width="2.6"/></g><defs><filter id="hs" x="-30%" y="-30%" width="160%" height="160%"><feDropShadow dx="0" dy="1.5" stdDeviation="2" flood-color="#000" flood-opacity="0.25"/></filter></defs></svg>
<div class="r" style="left:0.0px;top:386.0px;width:432.0px;height:104.0px;border:5px solid #fe2a55;border-radius:12px;box-sizing:border-box"></div>
<div class="r" style="left:0.0px;top:1548.0px;width:16.0px;height:6.0px;background:#1d3b1f;border-top-right-radius:16px 6px"></div>
<div class="r" style="left:2712.0px;top:1551.0px;width:8.0px;height:3.0px;background:#1d3b1f;border-top-left-radius:8px 3px"></div>
</div></body></html>
